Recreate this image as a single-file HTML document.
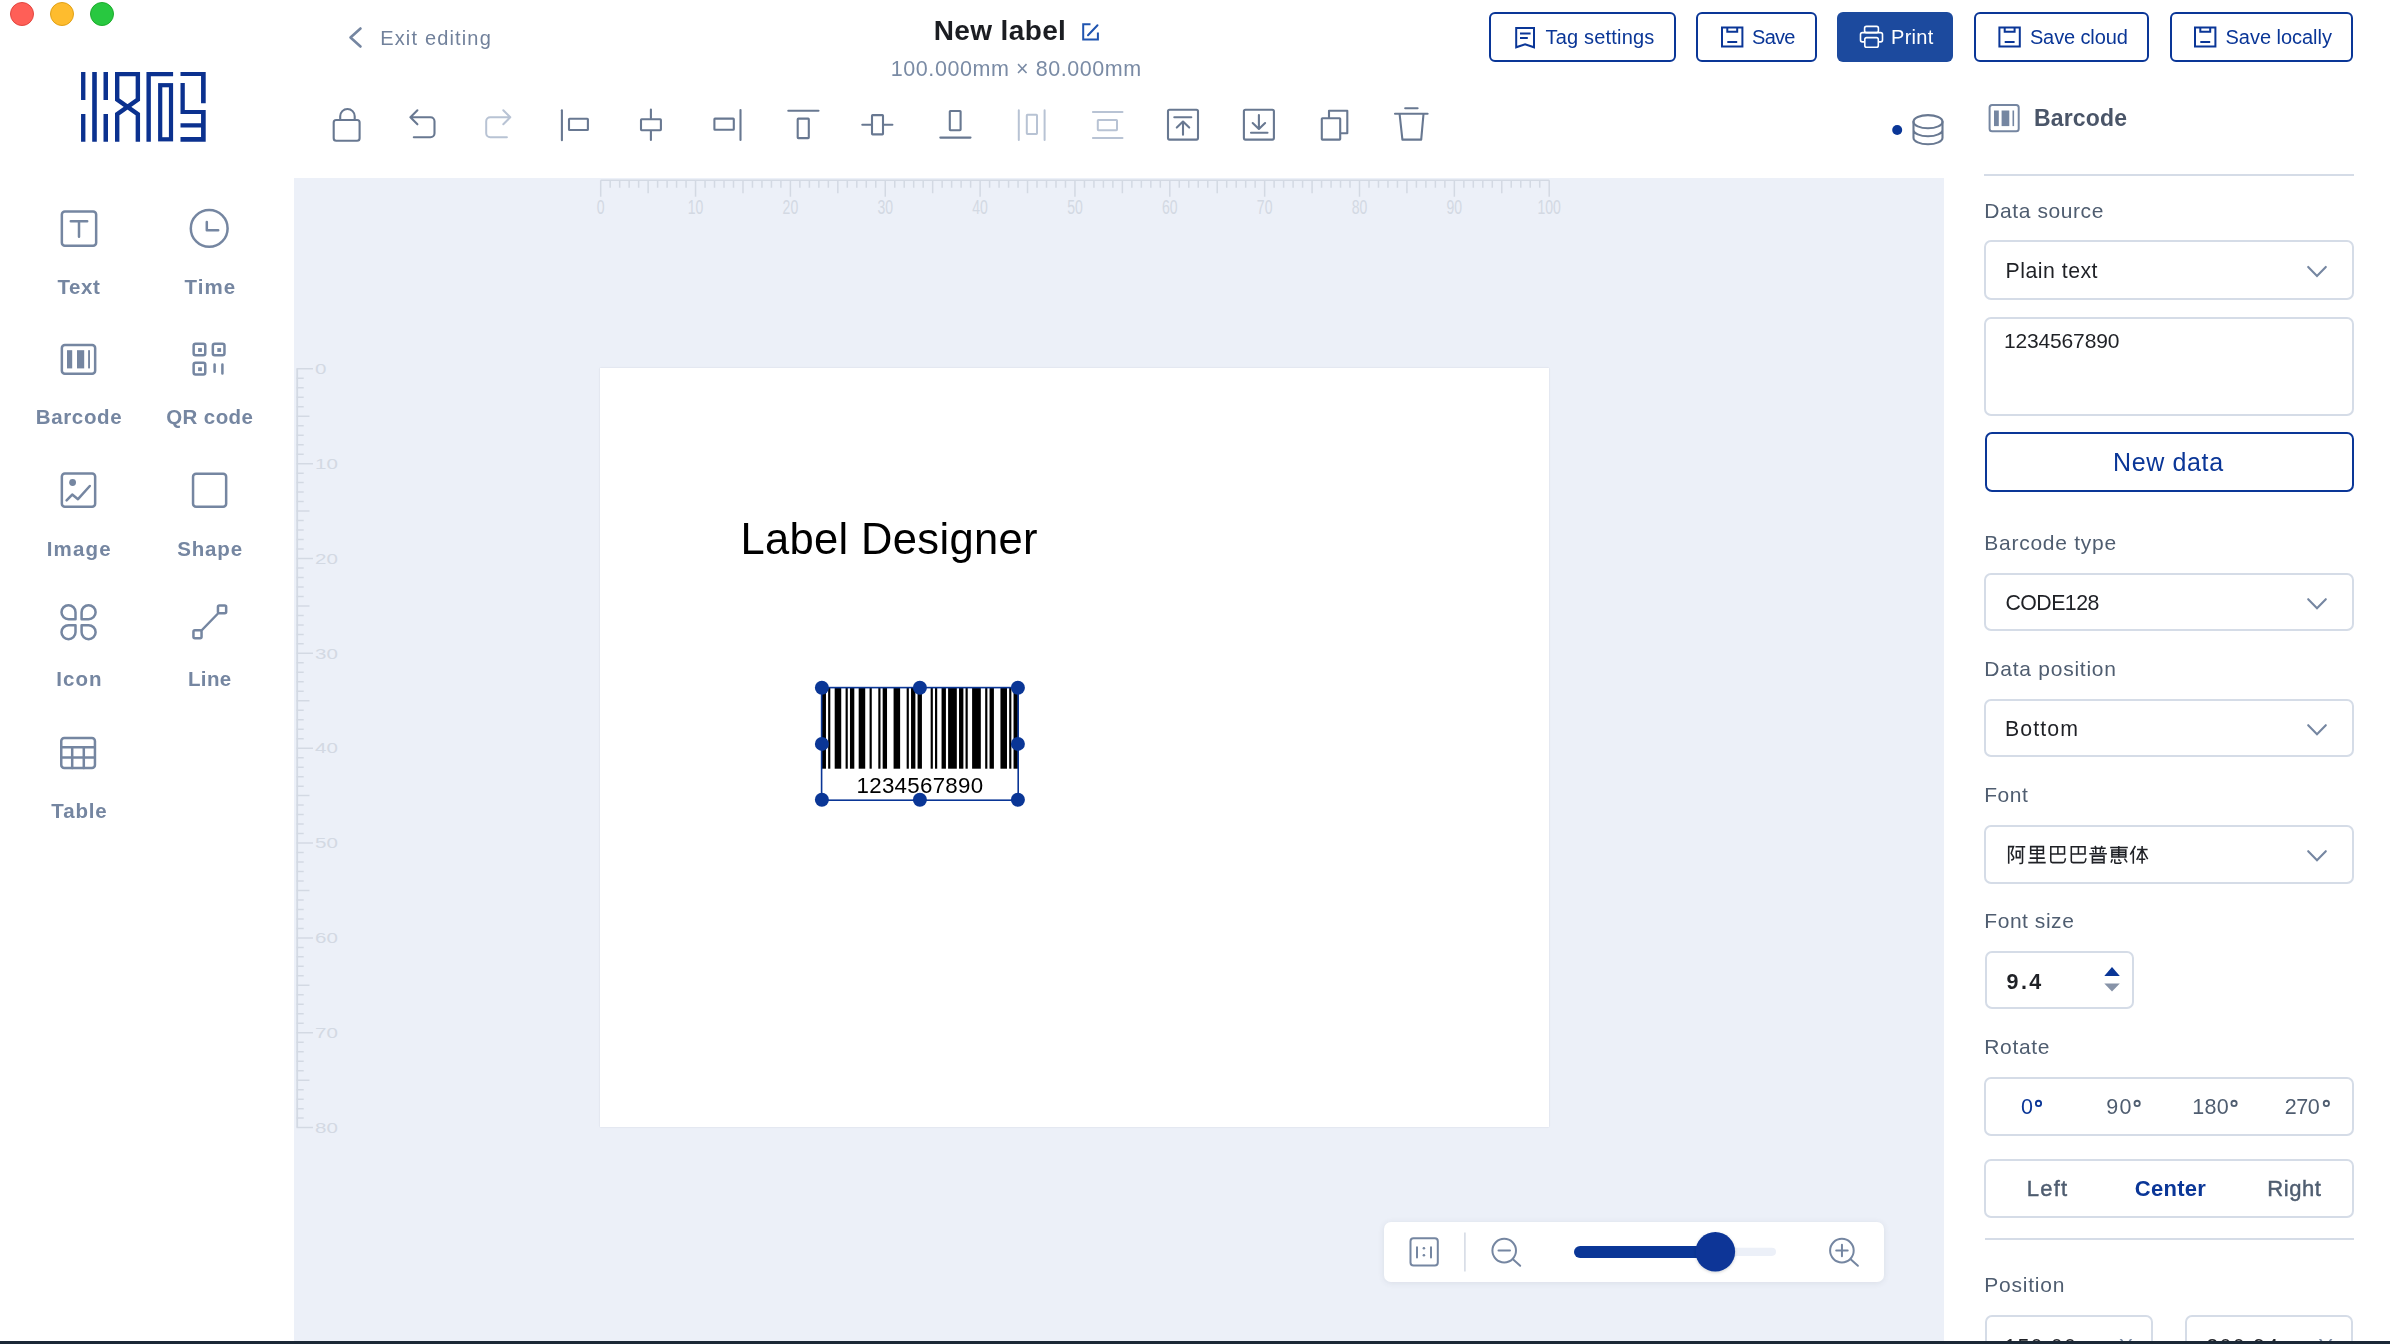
<!DOCTYPE html>
<html><head><meta charset="utf-8"><title>Label Designer</title>
<style>
html,body{margin:0;padding:0;width:2390px;height:1344px;overflow:hidden;background:#fff;}
body{font-family:"Liberation Sans",sans-serif;}
#app{position:relative;width:2390px;height:1344px;overflow:hidden;background:#fff}
.a{position:absolute;box-sizing:border-box}
.t{position:absolute;white-space:nowrap;line-height:1;font-family:"Liberation Sans",sans-serif}
#tx{position:absolute;left:0;top:0;width:2390px;height:1344px;will-change:transform}
svg.ov{position:absolute;left:0;top:0;width:2390px;height:1344px}
</style></head><body><div id="app">
<div class="a" style="left:294px;top:178px;width:1650px;height:1166px;background:#ecf0f8"></div>
<div class="a" style="left:600px;top:368px;width:949px;height:759px;background:#fff;box-shadow:0 0 1.5px rgba(90,100,115,0.18)"></div>
<div class="a" style="left:1489px;top:12px;width:187px;height:50px;border:2px solid #0a3697;border-radius:6px;background:#fff"></div>
<div class="a" style="left:1696px;top:12px;width:121px;height:50px;border:2px solid #0a3697;border-radius:6px;background:#fff"></div>
<div class="a" style="left:1837.2px;top:12px;width:116.3px;height:49.7px;border-radius:6px;background:#1c4a9e"></div>
<div class="a" style="left:1974px;top:12px;width:175px;height:50px;border:2px solid #0a3697;border-radius:6px;background:#fff"></div>
<div class="a" style="left:2170px;top:12px;width:183px;height:50px;border:2px solid #0a3697;border-radius:6px;background:#fff"></div>
<div class="a" style="left:1384px;top:1222px;width:500px;height:60px;background:#fff;border-radius:7px;box-shadow:0 1px 6px rgba(60,70,90,0.10)"></div>
<div class="a" style="left:1984px;top:174px;width:370px;height:2px;background:#d5dce7"></div>
<div class="a" style="left:1984.3px;top:240.2px;width:369.79999999999995px;height:59.69999999999999px;border:2px solid #d5dce7;border-radius:7px;background:#fff"></div>
<div class="a" style="left:1984.3px;top:316.6px;width:369.79999999999995px;height:99.19999999999999px;border:2px solid #d5dce7;border-radius:7px;background:#fff"></div>
<div class="a" style="left:1984.5px;top:432px;width:369px;height:59.5px;border:2.5px solid #0a3697;border-radius:7px;background:#fff"></div>
<div class="a" style="left:1984.3px;top:572.5px;width:369.79999999999995px;height:58.700000000000045px;border:2px solid #d5dce7;border-radius:7px;background:#fff"></div>
<div class="a" style="left:1984.3px;top:698.6px;width:369.79999999999995px;height:58.89999999999998px;border:2px solid #d5dce7;border-radius:7px;background:#fff"></div>
<div class="a" style="left:1984.3px;top:824.7px;width:369.79999999999995px;height:58.89999999999998px;border:2px solid #d5dce7;border-radius:7px;background:#fff"></div>
<div class="a" style="left:1984.5px;top:950.8px;width:149.30000000000018px;height:58.700000000000045px;border:2px solid #d5dce7;border-radius:7px;background:#fff"></div>
<div class="a" style="left:1984.3px;top:1076.5px;width:369.79999999999995px;height:59.0px;border:2px solid #d5dce7;border-radius:7px;background:#fff"></div>
<div class="a" style="left:1984.3px;top:1158.6px;width:369.79999999999995px;height:59.0px;border:2px solid #d5dce7;border-radius:7px;background:#fff"></div>
<div class="a" style="left:1984.7px;top:1237.6px;width:369px;height:2px;background:#d5dce7"></div>
<div class="a" style="left:1984.7px;top:1314.6px;width:168.60000000000014px;height:55.40000000000009px;border:2px solid #d5dce7;border-radius:7px;background:#fff"></div>
<div class="a" style="left:2184.7px;top:1314.6px;width:168.60000000000036px;height:55.40000000000009px;border:2px solid #d5dce7;border-radius:7px;background:#fff"></div>
<svg class="ov" width="2390" height="1344" viewBox="0 0 2390 1344">
<circle cx="22" cy="14" r="11.5" fill="#ff5f57" stroke="#e2463f" stroke-width="1"/>
<circle cx="62" cy="14" r="11.5" fill="#febc2e" stroke="#e1a116" stroke-width="1"/>
<circle cx="102" cy="14" r="11.5" fill="#28c840" stroke="#1dac2c" stroke-width="1"/>
<path d="M360.5,28.5 L350.5,37.5 L360.5,46.5" fill="none" stroke="#7586a1" stroke-width="2.6" stroke-linecap="round" stroke-linejoin="round"/>
<path d="M1090.5,24.3 H1083.2 V39.5 H1097.9 V32.5" fill="none" stroke="#1f54b0" stroke-width="2"/>
<path d="M1088,35.2 L1097.5,25.2" fill="none" stroke="#1f54b0" stroke-width="2" stroke-linecap="round"/>
<path d="M1516.2,28 H1534 V47.3 L1525.1,44.2 L1516.2,47.3 Z" fill="none" stroke="#0a3697" stroke-width="2" stroke-linejoin="miter"/><path d="M1520,33.5 H1530.6 M1520,38.1 H1527.8" stroke="#0a3697" stroke-width="2"/>
<path d="M1722,27.4 H1742.4 V46.4 H1722 Z" fill="none" stroke="#0a3697" stroke-width="2"/><path d="M1727.3,27.4 V31.8 H1737.2 V27.4" fill="none" stroke="#0a3697" stroke-width="2"/><path d="M1727.3,42 H1737.2" stroke="#0a3697" stroke-width="2"/>
<g fill="none" stroke="#fff" stroke-width="1.6"><rect x="1864.6" y="26.4" width="13.8" height="6.2" rx="1.8"/><path d="M1864.6,41.9 H1862.3 Q1860.5,41.9 1860.5,40 V34.6 Q1860.5,32.6 1862.4,32.6 H1880.6 Q1882.5,32.6 1882.5,34.6 V40 Q1882.5,41.9 1880.7,41.9 H1878.4"/><rect x="1864.8" y="37.6" width="13.5" height="9.6" rx="1.8"/></g>
<path d="M1999.4,27.4 H2019.8000000000002 V46.4 H1999.4 Z" fill="none" stroke="#0a3697" stroke-width="2"/><path d="M2004.7,27.4 V31.8 H2014.6000000000001 V27.4" fill="none" stroke="#0a3697" stroke-width="2"/><path d="M2004.7,42 H2014.6000000000001" stroke="#0a3697" stroke-width="2"/>
<path d="M2195,27.4 H2215.4 V46.4 H2195 Z" fill="none" stroke="#0a3697" stroke-width="2"/><path d="M2200.3,27.4 V31.8 H2210.2 V27.4" fill="none" stroke="#0a3697" stroke-width="2"/><path d="M2200.3,42 H2210.2" stroke="#0a3697" stroke-width="2"/>
<path fill="#0b318f" d="M81.05,72.05 H85.4 V100 H81.05 Z M81.05,114.1 H85.4 V141.7 H81.05 Z M92.2,72.05 H96.8 V141.7 H92.2 Z M103.5,72.05 H108 V100 H103.5 Z M103.5,114.1 H108 V141.7 H103.5 Z M180.5,72.05 H205.7 V76.1 H180.5 Z M201.05,72.05 H205.7 V103.2 H201.05 Z M180.5,83.1 H184.8 V113.9 H180.5 Z M180.5,109.9 H205.7 V113.9 H180.5 Z M201.05,109.9 H205.7 V141.7 H201.05 Z M180.5,123.3 H201.05 V127.6 H180.5 Z M180.5,137 H205.7 V141.7 H180.5 Z"/>
<path d="M117.2,141.7 V114.2 L137.85,99.5 V74.1 H117.2 V99.5 L137.85,114.2 V141.7" fill="none" stroke="#0b318f" stroke-width="4.4" stroke-linejoin="miter"/>
<path d="M148.65,141.7 V74.1 H173.1" fill="none" stroke="#0b318f" stroke-width="4.4"/>
<rect x="160.2" y="85.2" width="10.8" height="54.1" fill="none" stroke="#0b318f" stroke-width="4.2"/>
<g fill="none" stroke="#7586a1" stroke-width="2.5" stroke-linecap="round" stroke-linejoin="round">
<rect x="61.85" y="211.55" width="34.3" height="34.2" rx="3"/><path d="M70.8,221.2 H87.2 M79,221.2 V236.8"/>
<circle cx="209.2" cy="228.4" r="18.4"/><path d="M206.8,222 V230.3 H218.2"/>
<rect x="61.85" y="345.05" width="33.3" height="28.8" rx="3"/>
<rect x="193.65" y="343.65" width="11.6" height="11.6" rx="2"/><rect x="212.85" y="343.65" width="11.6" height="11.6" rx="2"/><rect x="193.65" y="362.85" width="11.6" height="11.6" rx="2"/>
<path d="M214.6,364.5 V371.7 M222.4,364.5 V373.4"/>
<rect x="61.85" y="473.45" width="33.3" height="33.3" rx="3"/><path d="M66.6,500.4 L72.2,494.6 L78,499.2 L89.8,486"/>
<rect x="193.05" y="473.85" width="33.1" height="32.9" rx="3"/>
<path d="M75.5,619.2 H68.5 A7,7 0 0 1 61.5,612.2 A7,7 0 0 1 68.5,605.2 A7,7 0 0 1 75.5,612.2 Z"/>
<path d="M81.6,619.2 H88.6 A7,7 0 0 0 95.6,612.2 A7,7 0 0 0 88.6,605.2 A7,7 0 0 0 81.6,612.2 Z"/>
<path d="M75.5,625.2 H68.5 A7,7 0 0 0 61.5,632.2 A7,7 0 0 0 68.5,639.2 A7,7 0 0 0 75.5,632.2 Z"/>
<path d="M81.6,625.2 H88.6 A7,7 0 0 1 95.6,632.2 A7,7 0 0 1 88.6,639.2 A7,7 0 0 1 81.6,632.2 Z"/>
<rect x="217.95" y="605.45" width="8.2" height="7.7" rx="1.5"/><rect x="193.45" y="630.25" width="8.1" height="8.1" rx="1.5"/><path d="M202,630 L217.5,614"/>
<rect x="61.25" y="737.95" width="33.7" height="30.1" rx="3"/><path d="M61.5,747.3 H94.8 M61.5,757.6 H94.8 M72.2,747.3 V768 M83.8,747.3 V768"/>
</g>
<g fill="#7586a1"><rect x="67" y="350.2" width="5.2" height="18.2"/><rect x="77" y="350.2" width="7.2" height="18.2"/><rect x="88.1" y="350.2" width="1.9" height="18.2"/><rect x="198.1" y="348.1" width="3.8" height="3.8"/><rect x="217.3" y="348.1" width="3.8" height="3.8"/><rect x="198.1" y="367.3" width="3.8" height="3.8"/><circle cx="72.6" cy="482.5" r="3.4"/></g>
<g fill="none" stroke="#687891" stroke-width="2.1" stroke-linecap="round" stroke-linejoin="round">
<rect x="333.7" y="120" width="25.9" height="20.7" rx="2.5"/><path d="M340.2,120 V116.25 A7.25,7.25 0 0 1 354.7,116.25 V120"/>
<path d="M417.4,110.3 L410.4,117.3 L417.4,124.3 M410.4,117.3 H430.5 A4,4 0 0 1 434.5,121.3 V133.3 A4,4 0 0 1 430.5,137.3 H413.8"/>
<path d="M561.9,110.3 V140.2"/><rect x="569" y="118.7" width="18.9" height="11.3" rx="0.6"/>
<path d="M650.9,109.5 V118.3 M650.9,131.2 V140"/><rect x="641" y="119.3" width="19.9" height="10.9" rx="0.6"/>
<rect x="714.4" y="118.6" width="19.4" height="11.2" rx="0.6"/><path d="M740.5,110 V140"/>
<path d="M788.3,110.8 H818.5"/><rect x="797.7" y="118.6" width="11.1" height="19.5" rx="0.6"/>
<path d="M862.3,124.8 H871 M884,124.8 H892.4"/><rect x="872" y="115.1" width="11" height="19.3" rx="0.6"/>
<rect x="949.8" y="111" width="10.8" height="19.2" rx="0.6"/><path d="M940.3,137.6 H970.5"/>
<rect x="1168" y="109.7" width="30" height="29.9" rx="1.5"/><path d="M1174.3,117.2 H1191.3 M1183,121.8 V134.8 M1176.8,127.6 L1183,121.6 L1189.2,127.6"/>
<rect x="1243.9" y="109.7" width="30" height="29.9" rx="1.5"/><path d="M1258.9,115 V128.5 M1252.7,123 L1258.9,129 L1265.1,123 M1251,132.7 H1267.5"/>
<path d="M1329,117.6 V110.7 H1347.3 V133.2 H1341.4"/><rect x="1321.8" y="118.2" width="18.4" height="21.4" rx="0.6"/>
<path d="M1395,113.8 H1427.6 M1405.2,108.3 H1417.6 M1399.6,114 L1402.4,139.6 H1421.2 L1423.5,114"/>
<ellipse cx="1928" cy="121.7" rx="14.5" ry="6.6"/><path d="M1913.5,121.7 V137.7 A14.5,6.6 0 0 0 1942.5,137.7 V121.7 M1913.5,129.7 A14.5,6.6 0 0 0 1942.5,129.7"/>
</g>
<g fill="none" stroke="#b8c3d4" stroke-width="2" stroke-linecap="round" stroke-linejoin="round">
<path d="M417.4,110.3 L410.4,117.3 L417.4,124.3 M410.4,117.3 H430.5 A4,4 0 0 1 434.5,121.3 V133.3 A4,4 0 0 1 430.5,137.3 H413.8" transform="translate(920.7,0) scale(-1,1)"/>
<path d="M1018.8,110.3 V140 M1044.6,110.3 V140"/><rect x="1026.8" y="114.8" width="10.2" height="19.1" rx="0.6"/>
<path d="M1092.9,112 H1122.5 M1092.9,137.9 H1122.5"/><rect x="1097.8" y="119.9" width="19.2" height="10.3" rx="0.6"/>
</g>
<circle cx="1897.2" cy="130" r="5" fill="#0a3697"/>
<path d="M600.7,180.3 H1549.2" stroke="#d3d9e3" stroke-width="1.6"/>
<path d="M600.70,180.3 V196.8 M610.19,180.3 V187.8 M619.67,180.3 V187.8 M629.16,180.3 V187.8 M638.64,180.3 V187.8 M648.12,180.3 V193.3 M657.61,180.3 V187.8 M667.10,180.3 V187.8 M676.58,180.3 V187.8 M686.07,180.3 V187.8 M695.55,180.3 V196.8 M705.04,180.3 V187.8 M714.52,180.3 V187.8 M724.00,180.3 V187.8 M733.49,180.3 V187.8 M742.98,180.3 V193.3 M752.46,180.3 V187.8 M761.95,180.3 V187.8 M771.43,180.3 V187.8 M780.91,180.3 V187.8 M790.40,180.3 V196.8 M799.88,180.3 V187.8 M809.37,180.3 V187.8 M818.86,180.3 V187.8 M828.34,180.3 V187.8 M837.83,180.3 V193.3 M847.31,180.3 V187.8 M856.80,180.3 V187.8 M866.28,180.3 V187.8 M875.77,180.3 V187.8 M885.25,180.3 V196.8 M894.74,180.3 V187.8 M904.22,180.3 V187.8 M913.71,180.3 V187.8 M923.19,180.3 V187.8 M932.67,180.3 V193.3 M942.16,180.3 V187.8 M951.64,180.3 V187.8 M961.13,180.3 V187.8 M970.62,180.3 V187.8 M980.10,180.3 V196.8 M989.59,180.3 V187.8 M999.07,180.3 V187.8 M1008.56,180.3 V187.8 M1018.04,180.3 V187.8 M1027.53,180.3 V193.3 M1037.01,180.3 V187.8 M1046.49,180.3 V187.8 M1055.98,180.3 V187.8 M1065.47,180.3 V187.8 M1074.95,180.3 V196.8 M1084.43,180.3 V187.8 M1093.92,180.3 V187.8 M1103.40,180.3 V187.8 M1112.89,180.3 V187.8 M1122.38,180.3 V193.3 M1131.86,180.3 V187.8 M1141.35,180.3 V187.8 M1150.83,180.3 V187.8 M1160.32,180.3 V187.8 M1169.80,180.3 V196.8 M1179.28,180.3 V187.8 M1188.77,180.3 V187.8 M1198.26,180.3 V187.8 M1207.74,180.3 V187.8 M1217.22,180.3 V193.3 M1226.71,180.3 V187.8 M1236.20,180.3 V187.8 M1245.68,180.3 V187.8 M1255.16,180.3 V187.8 M1264.65,180.3 V196.8 M1274.13,180.3 V187.8 M1283.62,180.3 V187.8 M1293.11,180.3 V187.8 M1302.59,180.3 V187.8 M1312.08,180.3 V193.3 M1321.56,180.3 V187.8 M1331.05,180.3 V187.8 M1340.53,180.3 V187.8 M1350.01,180.3 V187.8 M1359.50,180.3 V196.8 M1368.99,180.3 V187.8 M1378.47,180.3 V187.8 M1387.95,180.3 V187.8 M1397.44,180.3 V187.8 M1406.92,180.3 V193.3 M1416.41,180.3 V187.8 M1425.89,180.3 V187.8 M1435.38,180.3 V187.8 M1444.87,180.3 V187.8 M1454.35,180.3 V196.8 M1463.84,180.3 V187.8 M1473.32,180.3 V187.8 M1482.80,180.3 V187.8 M1492.29,180.3 V187.8 M1501.78,180.3 V193.3 M1511.26,180.3 V187.8 M1520.74,180.3 V187.8 M1530.23,180.3 V187.8 M1539.72,180.3 V187.8 M1549.20,180.3 V196.8" stroke="#d3d9e3" stroke-width="1.5"/>
<text x="600.70" y="213.9" font-size="19.5" text-anchor="middle" fill="#d3d9e3" transform="translate(600.70,0) scale(0.72,1) translate(-600.70,0)">0</text>
<text x="695.55" y="213.9" font-size="19.5" text-anchor="middle" fill="#d3d9e3" transform="translate(695.55,0) scale(0.72,1) translate(-695.55,0)">10</text>
<text x="790.40" y="213.9" font-size="19.5" text-anchor="middle" fill="#d3d9e3" transform="translate(790.40,0) scale(0.72,1) translate(-790.40,0)">20</text>
<text x="885.25" y="213.9" font-size="19.5" text-anchor="middle" fill="#d3d9e3" transform="translate(885.25,0) scale(0.72,1) translate(-885.25,0)">30</text>
<text x="980.10" y="213.9" font-size="19.5" text-anchor="middle" fill="#d3d9e3" transform="translate(980.10,0) scale(0.72,1) translate(-980.10,0)">40</text>
<text x="1074.95" y="213.9" font-size="19.5" text-anchor="middle" fill="#d3d9e3" transform="translate(1074.95,0) scale(0.72,1) translate(-1074.95,0)">50</text>
<text x="1169.80" y="213.9" font-size="19.5" text-anchor="middle" fill="#d3d9e3" transform="translate(1169.80,0) scale(0.72,1) translate(-1169.80,0)">60</text>
<text x="1264.65" y="213.9" font-size="19.5" text-anchor="middle" fill="#d3d9e3" transform="translate(1264.65,0) scale(0.72,1) translate(-1264.65,0)">70</text>
<text x="1359.50" y="213.9" font-size="19.5" text-anchor="middle" fill="#d3d9e3" transform="translate(1359.50,0) scale(0.72,1) translate(-1359.50,0)">80</text>
<text x="1454.35" y="213.9" font-size="19.5" text-anchor="middle" fill="#d3d9e3" transform="translate(1454.35,0) scale(0.72,1) translate(-1454.35,0)">90</text>
<text x="1549.20" y="213.9" font-size="19.5" text-anchor="middle" fill="#d3d9e3" transform="translate(1549.20,0) scale(0.72,1) translate(-1549.20,0)">100</text>
<path d="M297.2,368.8 V1127.6" stroke="#d3d9e3" stroke-width="1.8"/>
<path d="M296.5,368.80 H313.0 M296.5,378.29 H303.7 M296.5,387.77 H303.7 M296.5,397.25 H303.7 M296.5,406.74 H303.7 M296.5,416.23 H309.5 M296.5,425.71 H303.7 M296.5,435.19 H303.7 M296.5,444.68 H303.7 M296.5,454.17 H303.7 M296.5,463.65 H313.0 M296.5,473.13 H303.7 M296.5,482.62 H303.7 M296.5,492.11 H303.7 M296.5,501.59 H303.7 M296.5,511.07 H309.5 M296.5,520.56 H303.7 M296.5,530.05 H303.7 M296.5,539.53 H303.7 M296.5,549.01 H303.7 M296.5,558.50 H313.0 M296.5,567.99 H303.7 M296.5,577.47 H303.7 M296.5,586.95 H303.7 M296.5,596.44 H303.7 M296.5,605.92 H309.5 M296.5,615.41 H303.7 M296.5,624.89 H303.7 M296.5,634.38 H303.7 M296.5,643.87 H303.7 M296.5,653.35 H313.0 M296.5,662.84 H303.7 M296.5,672.32 H303.7 M296.5,681.81 H303.7 M296.5,691.29 H303.7 M296.5,700.77 H309.5 M296.5,710.26 H303.7 M296.5,719.75 H303.7 M296.5,729.23 H303.7 M296.5,738.71 H303.7 M296.5,748.20 H313.0 M296.5,757.68 H303.7 M296.5,767.17 H303.7 M296.5,776.65 H303.7 M296.5,786.14 H303.7 M296.5,795.62 H309.5 M296.5,805.11 H303.7 M296.5,814.60 H303.7 M296.5,824.08 H303.7 M296.5,833.57 H303.7 M296.5,843.05 H313.0 M296.5,852.53 H303.7 M296.5,862.02 H303.7 M296.5,871.50 H303.7 M296.5,880.99 H303.7 M296.5,890.47 H309.5 M296.5,899.96 H303.7 M296.5,909.44 H303.7 M296.5,918.93 H303.7 M296.5,928.41 H303.7 M296.5,937.90 H313.0 M296.5,947.38 H303.7 M296.5,956.87 H303.7 M296.5,966.36 H303.7 M296.5,975.84 H303.7 M296.5,985.33 H309.5 M296.5,994.81 H303.7 M296.5,1004.30 H303.7 M296.5,1013.78 H303.7 M296.5,1023.26 H303.7 M296.5,1032.75 H313.0 M296.5,1042.23 H303.7 M296.5,1051.72 H303.7 M296.5,1061.20 H303.7 M296.5,1070.69 H303.7 M296.5,1080.17 H309.5 M296.5,1089.66 H303.7 M296.5,1099.14 H303.7 M296.5,1108.63 H303.7 M296.5,1118.12 H303.7 M296.5,1127.60 H313.0" stroke="#d3d9e3" stroke-width="1.5"/>
<text x="315" y="374.10" font-size="14.5" fill="#d3d9e3" transform="translate(315,0) scale(1.42,1) translate(-315,0)">0</text>
<text x="315" y="468.95" font-size="14.5" fill="#d3d9e3" transform="translate(315,0) scale(1.42,1) translate(-315,0)">10</text>
<text x="315" y="563.80" font-size="14.5" fill="#d3d9e3" transform="translate(315,0) scale(1.42,1) translate(-315,0)">20</text>
<text x="315" y="658.65" font-size="14.5" fill="#d3d9e3" transform="translate(315,0) scale(1.42,1) translate(-315,0)">30</text>
<text x="315" y="753.50" font-size="14.5" fill="#d3d9e3" transform="translate(315,0) scale(1.42,1) translate(-315,0)">40</text>
<text x="315" y="848.35" font-size="14.5" fill="#d3d9e3" transform="translate(315,0) scale(1.42,1) translate(-315,0)">50</text>
<text x="315" y="943.20" font-size="14.5" fill="#d3d9e3" transform="translate(315,0) scale(1.42,1) translate(-315,0)">60</text>
<text x="315" y="1038.05" font-size="14.5" fill="#d3d9e3" transform="translate(315,0) scale(1.42,1) translate(-315,0)">70</text>
<text x="315" y="1132.90" font-size="14.5" fill="#d3d9e3" transform="translate(315,0) scale(1.42,1) translate(-315,0)">80</text>
<g fill="#000"><rect x="821.60" y="687.8" width="4.36" height="80.9"/><rect x="828.14" y="687.8" width="2.18" height="80.9"/><rect x="834.69" y="687.8" width="6.54" height="80.9"/><rect x="845.59" y="687.8" width="2.18" height="80.9"/><rect x="849.95" y="687.8" width="4.36" height="80.9"/><rect x="858.68" y="687.8" width="6.54" height="80.9"/><rect x="869.58" y="687.8" width="2.18" height="80.9"/><rect x="878.31" y="687.8" width="2.18" height="80.9"/><rect x="882.67" y="687.8" width="4.36" height="80.9"/><rect x="893.58" y="687.8" width="6.54" height="80.9"/><rect x="906.66" y="687.8" width="2.18" height="80.9"/><rect x="911.03" y="687.8" width="4.36" height="80.9"/><rect x="917.57" y="687.8" width="4.36" height="80.9"/><rect x="930.66" y="687.8" width="2.18" height="80.9"/><rect x="935.02" y="687.8" width="2.18" height="80.9"/><rect x="941.56" y="687.8" width="4.36" height="80.9"/><rect x="948.10" y="687.8" width="8.72" height="80.9"/><rect x="959.01" y="687.8" width="4.36" height="80.9"/><rect x="965.55" y="687.8" width="2.18" height="80.9"/><rect x="972.10" y="687.8" width="8.72" height="80.9"/><rect x="985.18" y="687.8" width="2.18" height="80.9"/><rect x="989.55" y="687.8" width="4.36" height="80.9"/><rect x="1000.45" y="687.8" width="6.54" height="80.9"/><rect x="1009.18" y="687.8" width="2.18" height="80.9"/><rect x="1013.54" y="687.8" width="4.36" height="80.9"/></g>
<rect x="821.6" y="687.6" width="196.6" height="112.6" fill="none" stroke="#0a3696" stroke-width="1.6"/>
<circle cx="821.9" cy="687.8" r="7" fill="#0a3696"/>
<circle cx="821.9" cy="743.9" r="7" fill="#0a3696"/>
<circle cx="821.9" cy="799.8" r="7" fill="#0a3696"/>
<circle cx="919.9" cy="687.8" r="7" fill="#0a3696"/>
<circle cx="919.9" cy="799.8" r="7" fill="#0a3696"/>
<circle cx="1017.9" cy="687.8" r="7" fill="#0a3696"/>
<circle cx="1017.9" cy="743.9" r="7" fill="#0a3696"/>
<circle cx="1017.9" cy="799.8" r="7" fill="#0a3696"/>
<g fill="none" stroke="#7586a1" stroke-width="2" stroke-linecap="round" stroke-linejoin="round">
<rect x="1410.5" y="1238.3" width="27.3" height="27.2" rx="3"/><path d="M1417,1247.3 V1257.5 M1431,1247.3 V1257.5"/>
<circle cx="1504.2" cy="1250.6" r="11.8"/><path d="M1513.2,1259.4 L1520.2,1265.8 M1498.5,1250.4 H1510"/>
<circle cx="1841.9" cy="1250.6" r="11.8"/><path d="M1850.9,1259.4 L1857.9,1265.8 M1836.2,1250.4 H1847.7 M1841.95,1244.7 V1256.2"/>
</g>
<g fill="#7586a1"><circle cx="1423.9" cy="1248.2" r="1.3"/><circle cx="1423.9" cy="1255.2" r="1.3"/></g>
<path d="M1464.9,1232.5 V1271.5" stroke="#d3d9e3" stroke-width="1.5"/>
<rect x="1574" y="1247.7" width="202" height="8.2" rx="4.1" fill="#ecf0f8"/>
<rect x="1574" y="1245.9" width="142" height="12.2" rx="6.1" fill="#0a3697"/>
<defs><filter id="ks" x="-50%" y="-50%" width="200%" height="200%"><feDropShadow dx="0" dy="1" stdDeviation="1.5" flood-color="#000" flood-opacity="0.18"/></filter></defs>
<circle cx="1715.3" cy="1251.7" r="19.8" fill="#0a3697" filter="url(#ks)"/>
<rect x="1989.6" y="105" width="29.1" height="26.2" rx="2.5" fill="none" stroke="#7586a1" stroke-width="2"/>
<g fill="#7586a1"><rect x="1994" y="110.5" width="4.8" height="15.6"/><rect x="2001.6" y="110.5" width="7.7" height="15.6"/><rect x="2012.5" y="110.5" width="1.6" height="15.6"/></g>
<path d="M2308.2,266.9 L2317,275.9 L2325.8,266.9" fill="none" stroke="#7586a1" stroke-width="2.1" stroke-linecap="round" stroke-linejoin="miter"/>
<path d="M2308.2,599.2 L2317,608.2 L2325.8,599.2" fill="none" stroke="#7586a1" stroke-width="2.1" stroke-linecap="round" stroke-linejoin="miter"/>
<path d="M2308.2,725.2 L2317,734.2 L2325.8,725.2" fill="none" stroke="#7586a1" stroke-width="2.1" stroke-linecap="round" stroke-linejoin="miter"/>
<path d="M2308.2,851.2 L2317,860.2 L2325.8,851.2" fill="none" stroke="#7586a1" stroke-width="2.1" stroke-linecap="round" stroke-linejoin="miter"/>
<path transform="translate(2007.9,846)" d="M0.8,17.7 V0.6 H5.6 L3.3,7.3 L5.8,11.3 Q6,13.8 3.2,14 M7.6,0.8 H17.3 M14.6,0.8 V16.2 Q14.6,17.4 13.3,17.4 H11.4 M8.4,5.3 H12.1 V11.6 H8.4 Z" fill="none" stroke="#1f2126" stroke-width="1.55" stroke-linecap="butt" stroke-linejoin="miter"/>
<path transform="translate(2028.1,846)" d="M2.6,0.6 H15.3 V7.8 H2.6 Z M2.6,4.2 H15.3 M9,0.6 V16.4 M1.6,12.1 H16.6 M0.2,16.6 H17.6" fill="none" stroke="#1f2126" stroke-width="1.55" stroke-linecap="butt" stroke-linejoin="miter"/>
<path transform="translate(2049.5,846)" d="M1.3,0.7 H15 V8 H1.3 Z M8.4,0.7 V8 M1.3,8 V15 Q1.3,16.6 3,16.6 H13.3 Q15.6,16.6 15.9,12.2" fill="none" stroke="#1f2126" stroke-width="1.55" stroke-linecap="butt" stroke-linejoin="miter"/>
<path transform="translate(2070.0,846)" d="M1.3,0.7 H15 V8 H1.3 Z M8.4,0.7 V8 M1.3,8 V15 Q1.3,16.6 3,16.6 H13.3 Q15.6,16.6 15.9,12.2" fill="none" stroke="#1f2126" stroke-width="1.55" stroke-linecap="butt" stroke-linejoin="miter"/>
<path transform="translate(2089.0,846)" d="M5.9,0 L7,1.6 M13.2,0 L12.1,1.6 M1.7,2.2 H16.7 M6.8,2.2 V7.7 M11.4,2.2 V7.7 M3.6,4.2 L4.8,6.4 M14.8,4.2 L13.6,6.4 M0.3,7.8 H17.9 M3.4,17.7 V10.1 H15 V17.7 M3.4,13.6 H15 M3.4,16.6 H15" fill="none" stroke="#1f2126" stroke-width="1.55" stroke-linecap="butt" stroke-linejoin="miter"/>
<path transform="translate(2109.8,846)" d="M0.4,1.5 H18 M9,0 V11.8 M2.1,3.9 H16 V11 H2.1 Z M2.1,6.2 H16 M2.1,8.6 H16 M1.2,16.6 L2.6,13.2 M5,13.2 V16.4 Q5,17.2 6,17.2 H10.6 L11.4,15.8 M8.6,13.4 L10.2,15 M14.6,12.6 L17.3,16.4" fill="none" stroke="#1f2126" stroke-width="1.55" stroke-linecap="butt" stroke-linejoin="miter"/>
<path transform="translate(2129.9,846)" d="M5.5,0 L0.4,8.6 M3.4,4.8 V17.8 M7.1,3.4 H17.7 M12.2,0 V17.8 M12,3.8 L6.8,13.8 M12.4,3.8 L17.8,13.2 M8.6,13.2 H15.4" fill="none" stroke="#1f2126" stroke-width="1.55" stroke-linecap="butt" stroke-linejoin="miter"/>
<path d="M2104.3,976.1 L2112,967 L2119.8,976.1 Z" fill="#0a3697"/><path d="M2104.3,983.6 L2112,991.4 L2119.8,983.6 Z" fill="#8793a8"/>
<circle cx="2038.5" cy="1103.4" r="2.65" fill="none" stroke="#0a3697" stroke-width="1.8"/>
<circle cx="2137.15" cy="1103.4" r="2.65" fill="none" stroke="#4f5d70" stroke-width="1.8"/>
<circle cx="2234.05" cy="1103.4" r="2.65" fill="none" stroke="#4f5d70" stroke-width="1.8"/>
<circle cx="2326.35" cy="1103.4" r="2.65" fill="none" stroke="#4f5d70" stroke-width="1.8"/>
</svg>
<div id="tx">
<div class="t" style="left:380.20px;top:28.00px;font-size:20px;color:#71819b;letter-spacing:1.159px;">Exit editing</div>
<div class="t" style="left:933.78px;top:17.00px;font-size:28px;color:#1b1d22;font-weight:700;letter-spacing:0.366px;">New label</div>
<div class="t" style="left:890.79px;top:59.00px;font-size:21.5px;color:#7a8ba5;letter-spacing:0.568px;">100.000mm × 80.000mm</div>
<div class="t" style="left:1545.50px;top:27.00px;font-size:20px;color:#0a3697;letter-spacing:0.186px;">Tag settings</div>
<div class="t" style="left:1752.10px;top:27.00px;font-size:20px;color:#0a3697;letter-spacing:-0.767px;">Save</div>
<div class="t" style="left:1891.10px;top:27.00px;font-size:20px;color:#ffffff;letter-spacing:0.250px;">Print</div>
<div class="t" style="left:2029.90px;top:27.00px;font-size:20px;color:#0a3697;letter-spacing:-0.111px;">Save cloud</div>
<div class="t" style="left:2225.50px;top:27.00px;font-size:20px;color:#0a3697;letter-spacing:-0.027px;">Save locally</div>
<div class="t" style="left:57.50px;top:277.00px;font-size:20.5px;color:#7586a1;font-weight:700;letter-spacing:0.590px;">Text</div>
<div class="t" style="left:184.59px;top:277.00px;font-size:20.5px;color:#7586a1;font-weight:700;letter-spacing:1.005px;">Time</div>
<div class="t" style="left:35.67px;top:407.00px;font-size:20.5px;color:#7586a1;font-weight:700;letter-spacing:0.666px;">Barcode</div>
<div class="t" style="left:166.18px;top:407.00px;font-size:20.5px;color:#7586a1;font-weight:700;letter-spacing:0.405px;">QR code</div>
<div class="t" style="left:46.67px;top:539.00px;font-size:20.5px;color:#7586a1;font-weight:700;letter-spacing:1.188px;">Image</div>
<div class="t" style="left:177.14px;top:539.00px;font-size:20.5px;color:#7586a1;font-weight:700;letter-spacing:0.883px;">Shape</div>
<div class="t" style="left:56.37px;top:669.00px;font-size:20.5px;color:#7586a1;font-weight:700;letter-spacing:1.012px;">Icon</div>
<div class="t" style="left:187.97px;top:669.00px;font-size:20.5px;color:#7586a1;font-weight:700;letter-spacing:0.357px;">Line</div>
<div class="t" style="left:51.34px;top:801.00px;font-size:20.5px;color:#7586a1;font-weight:700;letter-spacing:0.838px;">Table</div>
<div class="t" style="left:740.42px;top:518.00px;font-size:43.5px;color:#000000;letter-spacing:0.353px;">Label Designer</div>
<div class="t" style="left:856.53px;top:775.00px;font-size:22.3px;color:#000000;letter-spacing:0.291px;">1234567890</div>
<div class="t" style="left:2033.91px;top:107.00px;font-size:23px;color:#4a5568;font-weight:700;letter-spacing:0.190px;">Barcode</div>
<div class="t" style="left:1984.32px;top:200.00px;font-size:21px;color:#4f5d70;letter-spacing:0.578px;">Data source</div>
<div class="t" style="left:2005.60px;top:261.00px;font-size:21.3px;color:#1f2126;letter-spacing:0.479px;">Plain text</div>
<div class="t" style="left:2003.92px;top:330.00px;font-size:21px;color:#1f2126;letter-spacing:-0.144px;">1234567890</div>
<div class="t" style="left:2113.00px;top:450.00px;font-size:25px;color:#0a3697;letter-spacing:0.639px;">New data</div>
<div class="t" style="left:1984.32px;top:532.00px;font-size:21px;color:#4f5d70;letter-spacing:0.730px;">Barcode type</div>
<div class="t" style="left:2005.53px;top:593.00px;font-size:21.3px;color:#1f2126;letter-spacing:-0.543px;">CODE128</div>
<div class="t" style="left:1984.32px;top:658.00px;font-size:21px;color:#4f5d70;letter-spacing:0.755px;">Data position</div>
<div class="t" style="left:2004.90px;top:719.00px;font-size:21.3px;color:#1f2126;letter-spacing:1.104px;">Bottom</div>
<div class="t" style="left:1984.32px;top:784.00px;font-size:21px;color:#4f5d70;letter-spacing:0.462px;">Font</div>
<div class="t" style="left:1984.32px;top:910.00px;font-size:21px;color:#4f5d70;letter-spacing:0.540px;">Font size</div>
<div class="t" style="left:2006.60px;top:972.00px;font-size:21.5px;color:#1f2126;font-weight:700;letter-spacing:2.334px;">9.4</div>
<div class="t" style="left:1984.32px;top:1036.00px;font-size:21px;color:#4f5d70;letter-spacing:0.646px;">Rotate</div>
<div class="t" style="left:2020.99px;top:1097.00px;font-size:21.5px;color:#0a3697;">0</div>
<div class="t" style="left:2106.23px;top:1097.00px;font-size:21.5px;color:#4f5d70;letter-spacing:1.309px;">90</div>
<div class="t" style="left:2192.29px;top:1097.00px;font-size:21.5px;color:#4f5d70;letter-spacing:0.334px;">180</div>
<div class="t" style="left:2284.73px;top:1097.00px;font-size:21.5px;color:#4f5d70;letter-spacing:-0.435px;">270</div>
<div class="t" style="left:2026.84px;top:1178.00px;font-size:22px;color:#4f5d70;letter-spacing:1.228px;-webkit-text-stroke:0.45px #4f5d70;">Left</div>
<div class="t" style="left:2134.82px;top:1178.00px;font-size:22px;color:#0a3697;font-weight:700;letter-spacing:0.285px;">Center</div>
<div class="t" style="left:2267.34px;top:1178.00px;font-size:22px;color:#4f5d70;letter-spacing:0.550px;-webkit-text-stroke:0.45px #4f5d70;">Right</div>
<div class="t" style="left:1984.32px;top:1274.00px;font-size:21px;color:#4f5d70;letter-spacing:0.769px;">Position</div>
<div class="t" style="left:2004.29px;top:1337.00px;font-size:21.5px;color:#1f2126;letter-spacing:1.177px;">150.00</div>
<div class="t" style="left:2118.72px;top:1337.00px;font-size:21.5px;color:#7a8ba5;">X</div>
<div class="t" style="left:2206.33px;top:1337.00px;font-size:21.5px;color:#1f2126;letter-spacing:1.226px;">200.94</div>
<div class="t" style="left:2318.57px;top:1337.00px;font-size:21.5px;color:#7a8ba5;">Y</div>
</div>
<div class="a" style="left:0;top:1341px;width:2390px;height:3px;background:#1b2836"></div>
</div></body></html>
